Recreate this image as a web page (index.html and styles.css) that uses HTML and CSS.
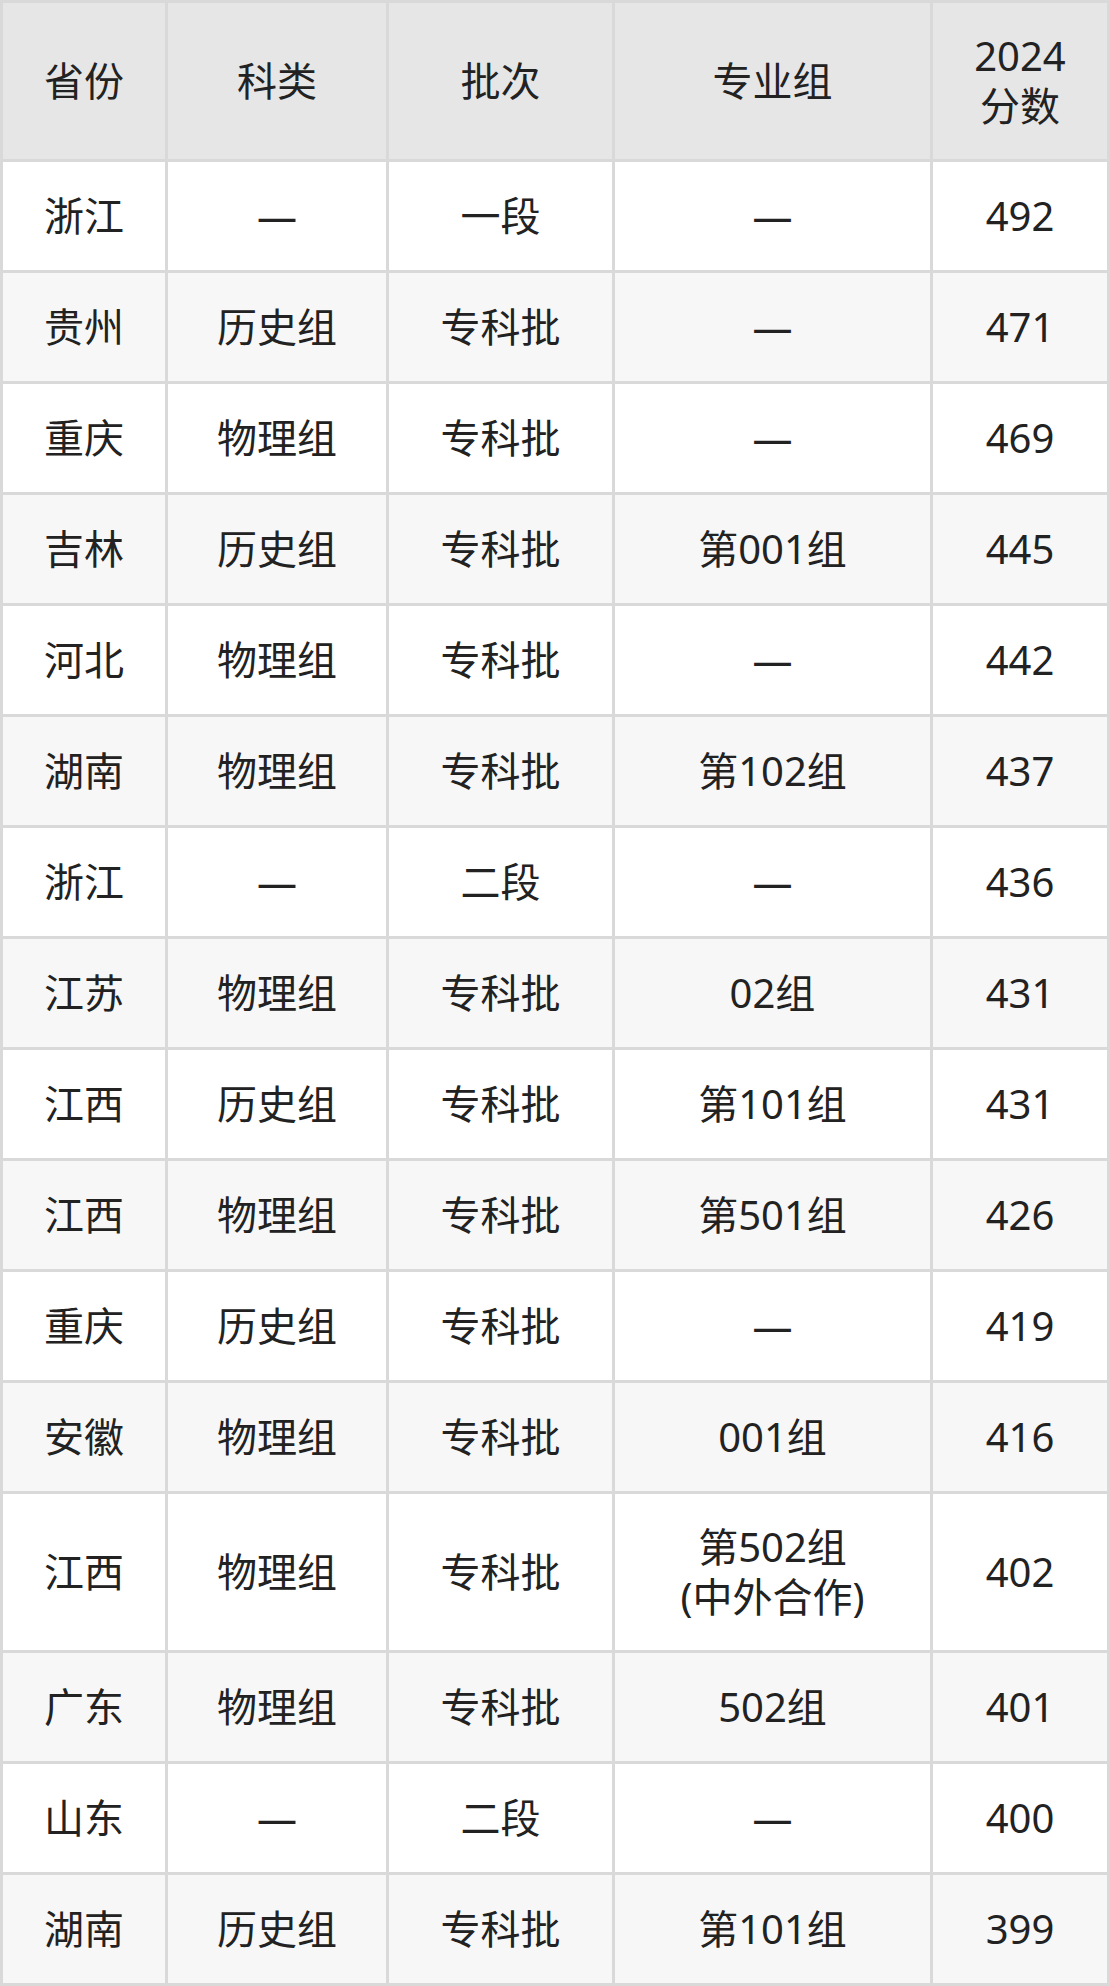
FILE: index.html
```html
<!DOCTYPE html>
<html lang="zh-CN">
<head>
<meta charset="utf-8">
<title>2024分数</title>
<link rel="stylesheet" href="styles.css">
</head>
<body>
<table class="scores">
  <colgroup>
    <col class="c-prov">
    <col class="c-type">
    <col class="c-batch">
    <col class="c-group">
    <col class="c-score">
  </colgroup>
  <thead>
    <tr><th>省份</th><th>科类</th><th>批次</th><th>专业组</th><th><span class="hl">2024</span><span class="hl">分数</span></th></tr>
  </thead>
  <tbody>
    <tr><td>浙江</td><td>—</td><td>一段</td><td>—</td><td>492</td></tr>
    <tr><td>贵州</td><td>历史组</td><td>专科批</td><td>—</td><td>471</td></tr>
    <tr><td>重庆</td><td>物理组</td><td>专科批</td><td>—</td><td>469</td></tr>
    <tr><td>吉林</td><td>历史组</td><td>专科批</td><td>第001组</td><td>445</td></tr>
    <tr><td>河北</td><td>物理组</td><td>专科批</td><td>—</td><td>442</td></tr>
    <tr><td>湖南</td><td>物理组</td><td>专科批</td><td>第102组</td><td>437</td></tr>
    <tr><td>浙江</td><td>—</td><td>二段</td><td>—</td><td>436</td></tr>
    <tr><td>江苏</td><td>物理组</td><td>专科批</td><td>02组</td><td>431</td></tr>
    <tr><td>江西</td><td>历史组</td><td>专科批</td><td>第101组</td><td>431</td></tr>
    <tr><td>江西</td><td>物理组</td><td>专科批</td><td>第501组</td><td>426</td></tr>
    <tr><td>重庆</td><td>历史组</td><td>专科批</td><td>—</td><td>419</td></tr>
    <tr><td>安徽</td><td>物理组</td><td>专科批</td><td>001组</td><td>416</td></tr>
    <tr class="tall"><td>江西</td><td>物理组</td><td>专科批</td><td><span class="hl">第502组</span><span class="hl">(中外合作)</span></td><td>402</td></tr>
    <tr><td>广东</td><td>物理组</td><td>专科批</td><td>502组</td><td>401</td></tr>
    <tr><td>山东</td><td>—</td><td>二段</td><td>—</td><td>400</td></tr>
    <tr><td>湖南</td><td>历史组</td><td>专科批</td><td>第101组</td><td>399</td></tr>
  </tbody>
</table>
</body>
</html>
```

FILE: styles.css
```css
html, body {
  margin: 0;
  padding: 0;
  background: #ffffff;
}

.scores {
  width: 1110px;
  table-layout: fixed;
  border-collapse: separate;
  border-spacing: 3px;
  background: #d9d9d9;
  font-family: "Noto Sans", "Noto Sans CJK SC", sans-serif;
  font-size: 40px;
  line-height: 50px;
  color: #222222;
}

.c-prov { width: 162px; }
.c-type { width: 218px; }
.c-batch { width: 223px; }
.c-group { width: 315px; }
.c-score { width: 174px; }

.scores th,
.scores td {
  padding: 0;
  text-align: center;
  vertical-align: middle;
  font-weight: 400;
}

.scores th {
  height: 156px;
  background: #e6e6e6;
}

.scores td {
  height: 108px;
  background: #ffffff;
}

.hl {
  display: block;
  height: 50px;
  line-height: 50px;
}

.scores tbody tr:nth-child(even) td {
  background: #f7f7f7;
}

.scores tr.tall td {
  height: 156px;
}
```
